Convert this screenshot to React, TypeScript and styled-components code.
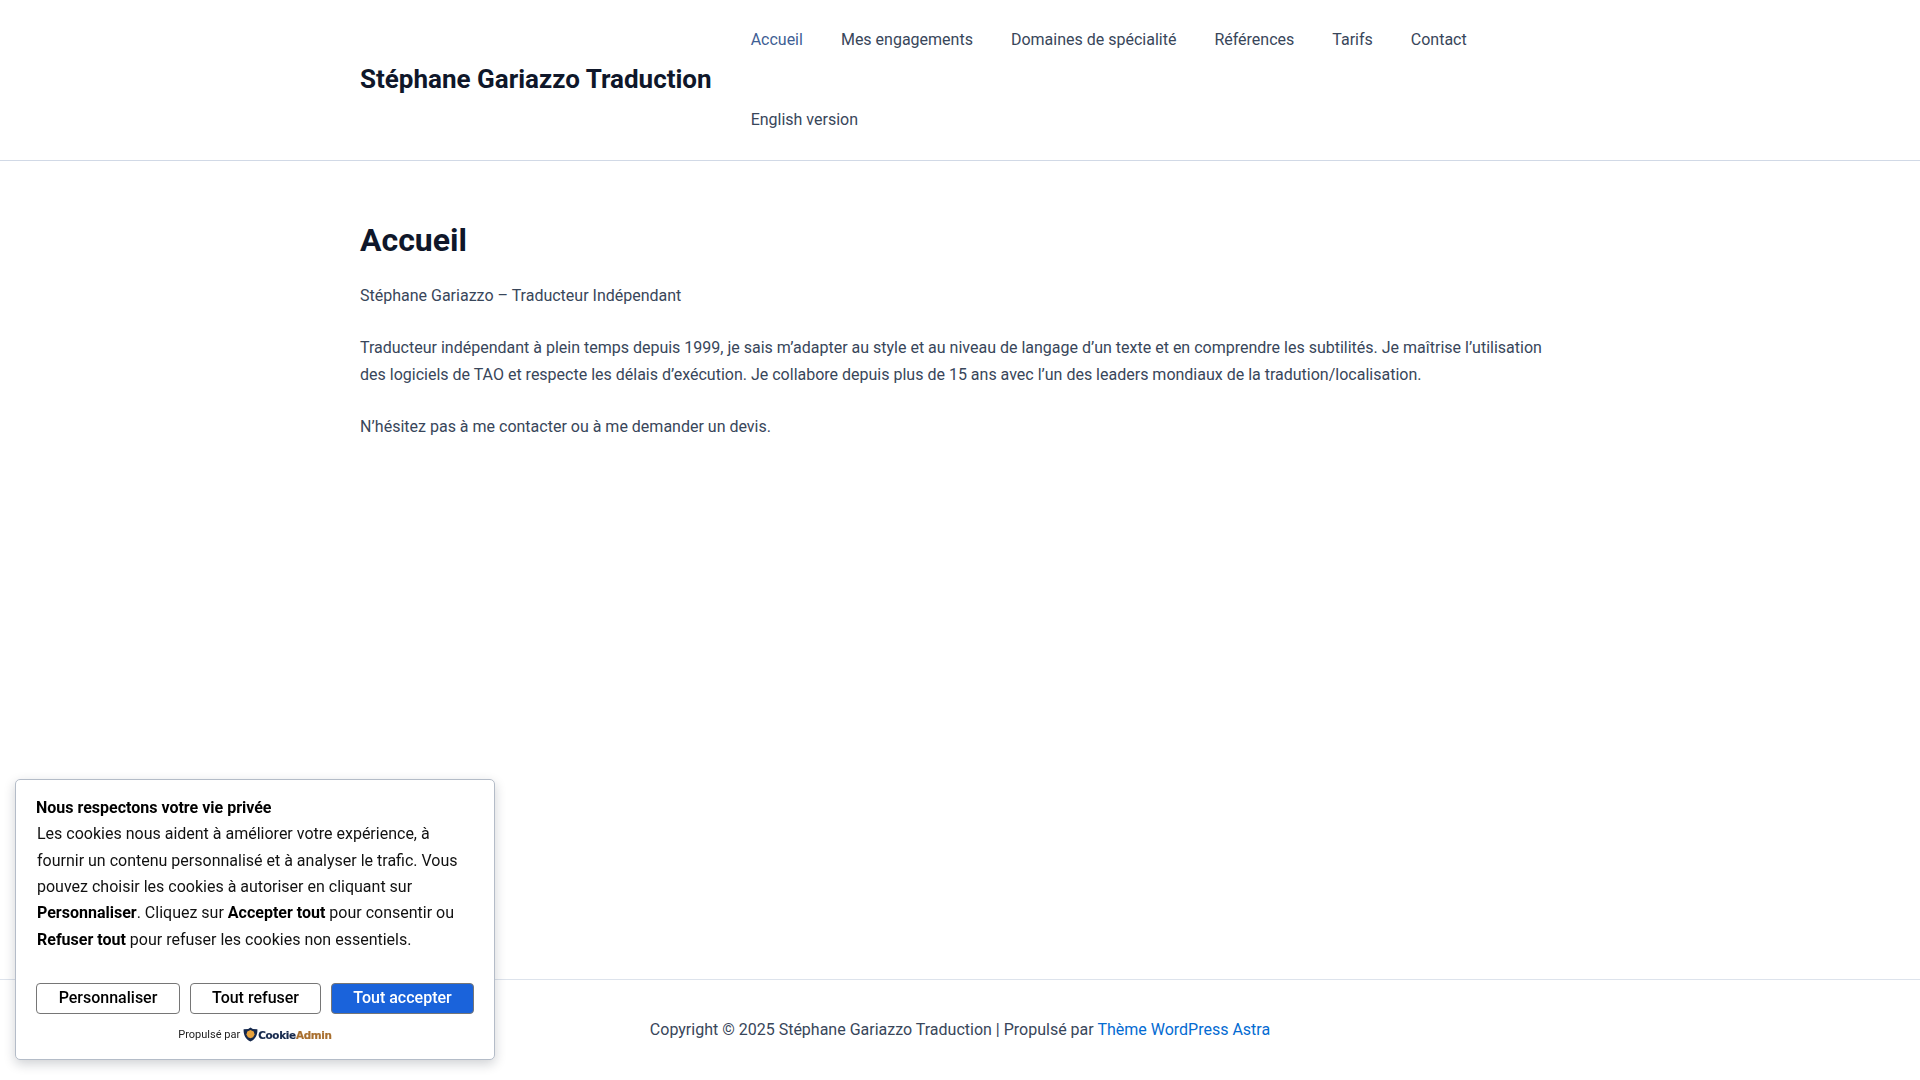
import React from 'react';
import styled, { createGlobalStyle } from 'styled-components';

const GlobalStyle = createGlobalStyle`
  html, body {
    margin: 0;
    padding: 0;
    background: #fff;
  }
  body {
    font-family: Roboto, "Liberation Sans", sans-serif;
    font-size: 16px;
    line-height: 1.7;
    color: #38465a;
  }
`;

const Page = styled.div`
  display: flex;
  flex-direction: column;
  min-height: 100vh;
`;

const Header = styled.header`
  border-bottom: 1px solid #d1d9e6;
`;

const Container = styled.div`
  box-sizing: border-box;
  width: 1240px;
  margin: 0 auto;
  padding: 0 20px;
`;

const HeaderRow = styled(Container)`
  display: flex;
  align-items: center;
  min-height: 160px;
`;

const SiteTitle = styled.a`
  flex: none;
  margin-right: 20px;
  font-size: 26px;
  font-weight: 700;
  line-height: 1.2;
  color: #0f172a;
  text-decoration: none;
`;

const Nav = styled.nav`
  display: flex;
  flex-wrap: wrap;
  flex: 1;
`;

const NavLink = styled.a<{ $active?: boolean }>`
  padding: 0 19px;
  line-height: 80px;
  font-size: 16px;
  color: ${(p) => (p.$active ? '#3f5f95' : '#38465a')};
  text-decoration: none;
`;

const Main = styled.main`
  flex: 1;
`;

const Article = styled(Container)`
  padding-top: 57px;
`;

const Title = styled.h1`
  margin: 0 0 19px;
  font-size: 32px;
  font-weight: 700;
  line-height: 1.4;
  color: #0f172a;
`;

const Para = styled.p`
  margin: 0 0 25px;
`;

const Footer = styled.footer`
  box-sizing: border-box;
  height: 101px;
  display: flex;
  align-items: center;
  justify-content: center;
  border-top: 1px solid #dde3ec;
`;

const FooterLink = styled.a`
  color: #046bd2;
  text-decoration: none;
`;

const CookieCard = styled.aside`
  position: fixed;
  left: 15px;
  bottom: 20px;
  box-sizing: border-box;
  width: 480px;
  height: 281px;
  padding: 15px 20px 0 20px;
  background: #fff;
  border: 1px solid #b4bcc8;
  border-radius: 5px;
  box-shadow: 0 4px 12px rgba(15, 23, 42, 0.2);
  color: #000;
`;

const CookieTitle = styled.div`
  font-size: 16px;
  font-weight: 700;
  line-height: 26.2px;
`;

const CookieText = styled.div`
  padding-left: 1px;
  font-size: 16px;
  line-height: 26.4px;
  color: #111;

  b {
    font-weight: 700;
    color: #000;
  }
`;

const Buttons = styled.div`
  display: flex;
  gap: 10px;
  margin-top: 29.3px;
`;

const Btn = styled.button<{ $primary?: boolean; $w: number }>`
  box-sizing: border-box;
  width: ${(p) => p.$w}px;
  height: 31px;
  padding: 0;
  font-family: inherit;
  font-size: 16px;
  font-weight: 500;
  line-height: 1;
  border-radius: 4px;
  border: 1px solid #767676;
  background: ${(p) => (p.$primary ? '#1a63db' : '#fff')};
  color: ${(p) => (p.$primary ? '#fff' : '#000')};
`;

const Powered = styled.div`
  display: flex;
  align-items: center;
  justify-content: center;
  gap: 3px;
  margin-top: 12px;
  font-size: 11px;
  line-height: 18px;
  color: #222;
`;

const Brand = styled.span`
  display: inline-flex;
  align-items: center;
  font-family: "DejaVu Sans", sans-serif;
  font-size: 10.4px;
  font-weight: 700;
  letter-spacing: -0.28px;
  color: #16294d;
  -webkit-text-stroke: 0.2px currentColor;

  em {
    font-style: normal;
    color: #a96f2e;
  }
`;

const Shield = () => (
  <svg width="15" height="15" viewBox="0 0 14 14" aria-hidden="true">
    <path d="M7 .4 9.2 1.8 13.4 2.2C13.8 7.6 11.4 11.6 7 13.6 2.6 11.6.2 7.6.6 2.2L4.8 1.8Z" fill="#16294d" />
    <path d="M7 2.9 10 4.2 10.8 7 9.4 9.6 7 10.5 4.6 9.6 3.2 7 4 4.2Z" fill="#e8a23c" />
  </svg>
);

const navItems = ['Mes engagements', 'Domaines de spécialité', 'Références', 'Tarifs', 'Contact', 'English version'];

export default function App() {
  return (
    <Page>
      <GlobalStyle />
      <Header>
        <HeaderRow>
          <SiteTitle href="#">Stéphane Gariazzo Traduction</SiteTitle>
          <Nav>
            <NavLink href="#" $active>Accueil</NavLink>
            {navItems.map((item) => (
              <NavLink href="#" key={item}>{item}</NavLink>
            ))}
          </Nav>
        </HeaderRow>
      </Header>
      <Main>
        <Article>
          <Title>Accueil</Title>
          <Para>Stéphane Gariazzo – Traducteur Indépendant</Para>
          <Para>
            Traducteur indépendant à plein temps depuis 1999, je sais m’adapter au style et au niveau de langage d’un texte et en comprendre les subtilités. Je maîtrise l’utilisation des logiciels de TAO et respecte les délais d’exécution. Je collabore depuis plus de 15 ans avec l’un des leaders mondiaux de la tradution/localisation.
          </Para>
          <Para>N’hésitez pas à me contacter ou à me demander un devis.</Para>
        </Article>
      </Main>
      <Footer>
        <span>
          Copyright © 2025 Stéphane Gariazzo Traduction | Propulsé par <FooterLink href="#">Thème WordPress Astra</FooterLink>
        </span>
      </Footer>
      <CookieCard>
        <CookieTitle>Nous respectons votre vie privée</CookieTitle>
        <CookieText>
          Les cookies nous aident à améliorer votre expérience, à fournir un contenu personnalisé et à analyser le trafic. Vous pouvez choisir les cookies à autoriser en cliquant sur <b>Personnaliser</b>. Cliquez sur <b>Accepter tout</b> pour consentir ou <b>Refuser tout</b> pour refuser les cookies non essentiels.
        </CookieText>
        <Buttons>
          <Btn $w={144}>Personnaliser</Btn>
          <Btn $w={131}>Tout refuser</Btn>
          <Btn $w={143} $primary>Tout accepter</Btn>
        </Buttons>
        <Powered>
          Propulsé par
          <Brand>
            <Shield />
            <span>Cookie<em>Admin</em></span>
          </Brand>
        </Powered>
      </CookieCard>
    </Page>
  );
}
